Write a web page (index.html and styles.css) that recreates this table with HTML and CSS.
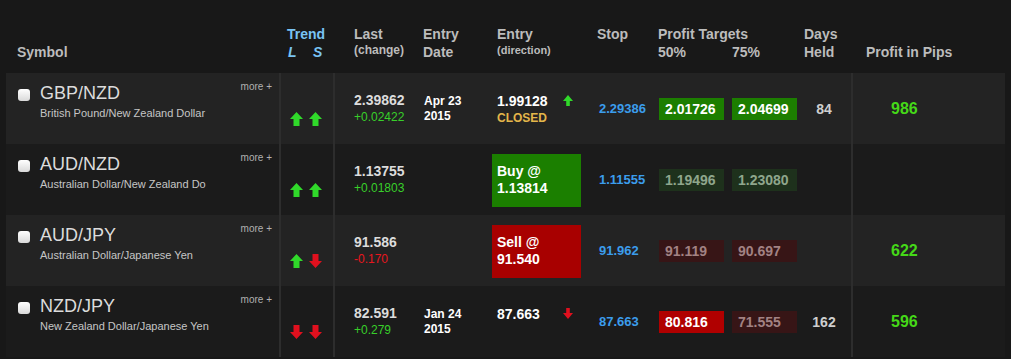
FILE: index.html
```html
<!DOCTYPE html>
<html>
<head>
<meta charset="utf-8">
<link rel="stylesheet" href="styles.css">
</head>
<body>
<div class="table">
  <div class="thead">
    <div class="col c-sym"><div class="h2nd">Symbol</div></div>
    <div class="sep sep-h"></div>
    <div class="col c-trend th-trend">
      <div>Trend</div>
      <div class="ls"><span class="ls-l">L</span><span>S</span></div>
    </div>
    <div class="sep sep-h"></div>
    <div class="col c-last th-last"><div>Last</div><div class="hsmall">(change)</div></div>
    <div class="col c-date th-date"><div>Entry</div><div>Date</div></div>
    <div class="col c-entry th-entry"><div>Entry</div><div class="hsmall hsm11">(direction)</div></div>
    <div class="col c-stop th-stop"><div>Stop</div></div>
    <div class="col c-pt th-pt"><div class="nowrap">Profit Targets</div><div>50%</div></div>
    <div class="col c-pt2 th-pt2"><div>&nbsp;</div><div>75%</div></div>
    <div class="col c-days th-days"><div>Days</div><div>Held</div></div>
    <div class="sep sep-h"></div>
    <div class="col c-pips th-pips"><div class="h2nd">Profit in Pips</div></div>
  </div>

  <!-- Row 1 -->
  <div class="row light">
    <div class="col c-sym sym">
      <span class="cb"></span>
      <div class="symtext">
        <div class="symname">GBP/NZD</div>
        <div class="symdesc">British Pound/New Zealand Dollar</div>
      </div>
      <span class="more">more +</span>
    </div>
    <div class="sep"></div>
    <div class="col c-trend trend">
      <svg class="arr" viewBox="0 0 13 14"><polygon class="up" points="6.5,0 13,7 9.5,7 9.5,14 3.5,14 3.5,7 0,7"/></svg>
      <svg class="arr" viewBox="0 0 13 14"><polygon class="up" points="6.5,0 13,7 9.5,7 9.5,14 3.5,14 3.5,7 0,7"/></svg>
    </div>
    <div class="sep"></div>
    <div class="col c-last"><div class="lastv">2.39862</div><div class="chg pos">+0.02422</div></div>
    <div class="col c-date"><div class="dt">Apr 23</div><div class="dt">2015</div></div>
    <div class="col c-entry entry">
      <div class="eline"><span class="ev">1.99128</span><svg class="sarr" viewBox="0 0 10 11"><polygon class="up" points="5,0 10,6 6.8,6 6.8,11 3.2,11 3.2,6 0,6"/></svg></div>
      <div class="closed">CLOSED</div>
    </div>
    <div class="col c-stop stop">2.29386</div>
    <div class="col c-pt"><span class="box g-on">2.01726</span></div>
    <div class="col c-pt2"><span class="box g-on">2.04699</span></div>
    <div class="col c-days days">84</div>
    <div class="sep"></div>
    <div class="col c-pips pips">986</div>
  </div>

  <!-- Row 2 -->
  <div class="row dark">
    <div class="col c-sym sym">
      <span class="cb"></span>
      <div class="symtext">
        <div class="symname">AUD/NZD</div>
        <div class="symdesc">Australian Dollar/New Zealand Do</div>
      </div>
      <span class="more">more +</span>
    </div>
    <div class="sep"></div>
    <div class="col c-trend trend">
      <svg class="arr" viewBox="0 0 13 14"><polygon class="up" points="6.5,0 13,7 9.5,7 9.5,14 3.5,14 3.5,7 0,7"/></svg>
      <svg class="arr" viewBox="0 0 13 14"><polygon class="up" points="6.5,0 13,7 9.5,7 9.5,14 3.5,14 3.5,7 0,7"/></svg>
    </div>
    <div class="sep"></div>
    <div class="col c-last"><div class="lastv">1.13755</div><div class="chg pos">+0.01803</div></div>
    <div class="col c-date"></div>
    <div class="col c-entry"><div class="order buy">Buy @<br>1.13814</div></div>
    <div class="col c-stop stop">1.11555</div>
    <div class="col c-pt"><span class="box g-off">1.19496</span></div>
    <div class="col c-pt2"><span class="box g-off">1.23080</span></div>
    <div class="col c-days days"></div>
    <div class="sep"></div>
    <div class="col c-pips pips"></div>
  </div>

  <!-- Row 3 -->
  <div class="row light">
    <div class="col c-sym sym">
      <span class="cb"></span>
      <div class="symtext">
        <div class="symname">AUD/JPY</div>
        <div class="symdesc">Australian Dollar/Japanese Yen</div>
      </div>
      <span class="more">more +</span>
    </div>
    <div class="sep"></div>
    <div class="col c-trend trend">
      <svg class="arr" viewBox="0 0 13 14"><polygon class="up" points="6.5,0 13,7 9.5,7 9.5,14 3.5,14 3.5,7 0,7"/></svg>
      <svg class="arr" viewBox="0 0 13 14"><polygon class="dn" points="6.5,14 13,7 9.5,7 9.5,0 3.5,0 3.5,7 0,7"/></svg>
    </div>
    <div class="sep"></div>
    <div class="col c-last"><div class="lastv">91.586</div><div class="chg neg">-0.170</div></div>
    <div class="col c-date"></div>
    <div class="col c-entry"><div class="order sell">Sell @<br>91.540</div></div>
    <div class="col c-stop stop">91.962</div>
    <div class="col c-pt"><span class="box r-off">91.119</span></div>
    <div class="col c-pt2"><span class="box r-off">90.697</span></div>
    <div class="col c-days days"></div>
    <div class="sep"></div>
    <div class="col c-pips pips">622</div>
  </div>

  <!-- Row 4 -->
  <div class="row dark">
    <div class="col c-sym sym">
      <span class="cb"></span>
      <div class="symtext">
        <div class="symname">NZD/JPY</div>
        <div class="symdesc">New Zealand Dollar/Japanese Yen</div>
      </div>
      <span class="more">more +</span>
    </div>
    <div class="sep"></div>
    <div class="col c-trend trend">
      <svg class="arr" viewBox="0 0 13 14"><polygon class="dn" points="6.5,14 13,7 9.5,7 9.5,0 3.5,0 3.5,7 0,7"/></svg>
      <svg class="arr" viewBox="0 0 13 14"><polygon class="dn" points="6.5,14 13,7 9.5,7 9.5,0 3.5,0 3.5,7 0,7"/></svg>
    </div>
    <div class="sep"></div>
    <div class="col c-last"><div class="lastv">82.591</div><div class="chg pos">+0.279</div></div>
    <div class="col c-date"><div class="dt">Jan 24</div><div class="dt">2015</div></div>
    <div class="col c-entry entry">
      <div class="eline"><span class="ev">87.663</span><svg class="sarr" viewBox="0 0 10 11"><polygon class="dn" points="5,11 10,5 6.8,5 6.8,0 3.2,0 3.2,5 0,5"/></svg></div>
      <div class="closed">&nbsp;</div>
    </div>
    <div class="col c-stop stop">87.663</div>
    <div class="col c-pt"><span class="box r-on">80.816</span></div>
    <div class="col c-pt2"><span class="box r-off">71.555</span></div>
    <div class="col c-days days">162</div>
    <div class="sep"></div>
    <div class="col c-pips pips">596</div>
  </div>
</div>
</body>
</html>
```

FILE: styles.css
```css
html, body {
  margin: 0;
  padding: 0;
  background: #181818;
}
body {
  font-family: "Liberation Sans", Arial, Helvetica, sans-serif;
  color: #dcdcdc;
}
.table {
  margin: 0 6px;
  width: 999px;
}
.thead {
  display: flex;
  height: 73px;
  box-sizing: border-box;
  padding-top: 25px;
  font-weight: bold;
  font-size: 14px;
  line-height: 18px;
  color: #bcbcbc;
}
.thead .col { align-self: flex-start; }
.h2nd { margin-top: 18px; }
.nowrap { white-space: nowrap; }
.hsmall {
  font-size: 12px;
  line-height: 15px;
}
.hsm11 { font-size: 11px; }

.row {
  display: flex;
  height: 71px;
  align-items: center;
}
.row.light { background: #232323; }
.row.dark { background: #1b1b1b; }

.col { flex: none; box-sizing: border-box; }
.sep { flex: none; width: 2px; align-self: stretch; background: #2d2d2d; }
.sep-h { background: transparent; }

.c-sym { width: 273px; }
.c-trend { width: 52px; }
.c-last { width: 79px; padding-left: 19px; }
.c-date { width: 73px; padding-left: 10px; }
.c-entry { width: 103px; padding-left: 5px; }
.c-stop { width: 64px; padding-left: 9px; }
.c-pt { width: 73px; padding-left: 5px; }
.c-pt2 { width: 70px; padding-left: 5px; }
.c-days { width: 54px; text-align: center; }
.c-pips { width: 152px; padding-left: 38px; }

/* header offsets */
.thead .c-sym { padding-left: 11px; }
.th-trend { padding-left: 6px; color: #79c3f3; white-space: nowrap; }
.ls { font-style: italic; padding-left: 1px; }
.ls-l { display: inline-block; width: 25px; }
.th-last { padding-left: 19px; }
.th-date { padding-left: 9px; }
.th-entry { padding-left: 10px; }
.th-stop { padding-left: 7px; }
.th-pt { padding-left: 4px; }
.th-pt2 { padding-left: 5px; }
.th-days { padding-left: 7px; text-align: left; }
.th-pips { padding-left: 13px; }

/* symbol cell */
.sym {
  align-self: stretch;
  display: flex;
  align-items: flex-start;
  padding: 9px 7px 0 12px;
}
.cb {
  flex: none;
  width: 12px;
  height: 12px;
  margin-top: 7px;
  margin-right: 10px;
  border-radius: 3px;
  background: linear-gradient(#ffffff, #d9d9d9);
}
.symtext { flex: 1; }
.symname {
  font-size: 18px;
  line-height: 22px;
  color: #dcdcdc;
}
.symdesc {
  font-size: 11px;
  line-height: 18px;
  color: #c6c6c6;
}
.more {
  flex: none;
  font-size: 10px;
  line-height: 12px;
  margin-top: -1px;
  color: #b0b0b0;
}

/* trend */
.trend {
  align-self: flex-start;
  padding: 39px 0 0 9px;
  display: flex;
  gap: 6px;
}
.arr { width: 13px; height: 14px; display: block; }
.up { fill: #30d92a; }
.dn { fill: #e0101e; }

/* last */
.lastv {
  font-weight: bold;
  font-size: 14px;
  line-height: 17px;
  color: #dcdcdc;
}
.chg {
  font-size: 12px;
  line-height: 17px;
}
.pos { color: #38cf2a; }
.neg { color: #e8161e; }

.dt {
  font-weight: bold;
  font-size: 12px;
  line-height: 15px;
  color: #ffffff;
}

/* entry */
.entry { padding-left: 10px; padding-top: 2px; }
.eline { display: flex; align-items: center; height: 17px; }
.ev {
  display: inline-block;
  width: 66px;
  font-weight: bold;
  font-size: 14px;
  line-height: 17px;
  color: #ffffff;
}
.sarr { width: 10px; height: 11px; display: block; margin-top: -1px; }
.closed {
  font-weight: bold;
  font-size: 12px;
  line-height: 17px;
  color: #e3b64a;
}
.order {
  width: 89px;
  height: 53px;
  box-sizing: border-box;
  padding: 9px 5px 0;
  margin-top: 2px;
  font-weight: bold;
  font-size: 14px;
  line-height: 17px;
  color: #ffffff;
}
.buy { background: #1b7f00; }
.sell { background: #a80000; }

.stop {
  font-weight: bold;
  font-size: 13px;
  color: #3b9dec;
}

.box {
  display: block;
  width: 65px;
  height: 22px;
  line-height: 22px;
  box-sizing: border-box;
  padding-left: 6px;
  font-weight: bold;
  font-size: 14px;
}
.g-on { background: #1c7e00; color: #ffffff; }
.g-off { background: #1e311c; color: #8fa68c; }
.r-on { background: #b00000; color: #ffffff; }
.r-off { background: #371516; color: #a28283; }

.days {
  font-weight: bold;
  font-size: 14px;
  color: #cfcfcf;
}
.pips {
  font-weight: bold;
  font-size: 16px;
  color: #45d818;
}
```
